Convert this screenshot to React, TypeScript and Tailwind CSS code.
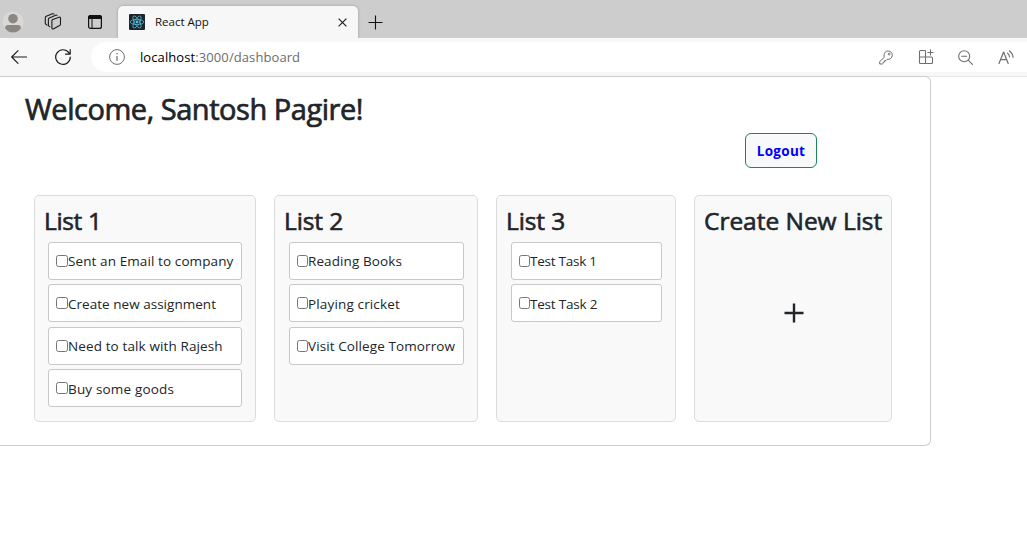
type Task = { label: string; track: string };
type List = { title: string; width: string; tasks: Task[]; pad: string; box: string; track: string };

const lists: List[] = [
  {
    title: "List 1",
    width: "w-[222px]",
    pad: "mx-[13px]",
    box: "w-[12px]",
    track: "tracking-[-0.35px]",
    tasks: [
      { label: "Sent an Email to company", track: "tracking-[0.1px]" },
      { label: "Create new assignment", track: "tracking-[0.03px]" },
      { label: "Need to talk with Rajesh", track: "tracking-[0.12px]" },
      { label: "Buy some goods", track: "tracking-[0.17px]" },
    ],
  },
  {
    title: "List 2",
    width: "w-[204px]",
    pad: "ml-[14px] mr-[13px]",
    box: "w-[11px]",
    track: "tracking-[-0.1px]",
    tasks: [
      { label: "Reading Books", track: "tracking-[0.1px]" },
      { label: "Playing cricket", track: "tracking-[0.15px]" },
      { label: "Visit College Tomorrow", track: "tracking-[0.1px]" },
    ],
  },
  {
    title: "List 3",
    width: "w-[180px]",
    pad: "ml-[14px] mr-[13px]",
    box: "w-[11px]",
    track: "tracking-[-0.1px]",
    tasks: [
      { label: "Test Task 1", track: "tracking-[-0.25px]" },
      { label: "Test Task 2", track: "tracking-[-0.2px]" },
    ],
  },
];

function TabStrip() {
  return (
    <div className="flex h-[38px] items-end bg-[#cdcdcd]">
      <div className="flex h-[32px] w-[118px] shrink-0 items-center">
        <svg className="ml-[2px]" width="22" height="22" viewBox="0 0 22 22">
          <circle cx="11" cy="11" r="10.5" fill="#dad8d5" />
          <circle cx="11" cy="7.7" r="4.8" fill="#8b8785" />
          <path d="M3 17.200c0-2.300 1.300-3.300 3.200-3.300h9.600c1.900 0 3.200 1 3.200 3.300-1.800 2.800-4.700 4.300-8 4.300s-6.200-1.500-8-4.300z" fill="#8b8785" />
        </svg>
        <svg className="ml-[20px]" width="18" height="18" viewBox="0 0 18 18" fill="none" stroke="#1b1b1b" strokeWidth="1.100" strokeLinejoin="round" strokeLinecap="round">
          <path d="M8.200 6.800l6.800-2.600c.8-.3 1.500.1 1.500.9v6.100c0 .6-.3 1-.9 1.300l-5.900 3.300c-.9.500-1.800.1-1.800-.9V7.700c0-.4.100-.7.300-.9z" />
          <path d="M5.800 13.700l-.9-.6c-.4-.3-.5-.6-.5-1.100V6.300c0-.7.300-1.100.9-1.400L11.600 2.200c.5-.2 1-.2 1.400.2" />
          <path d="M3 12.100l-1.100-.8c-.4-.3-.6-.6-.6-1.100V4.700c0-.7.300-1.100.9-1.400L8.400.8c.6-.2 1-.2 1.500.2" />
        </svg>
        <svg className="ml-[26px]" width="14" height="14" viewBox="0 0 14 14">
          <rect x=".6" y=".6" width="12.800" height="12.800" rx="2" fill="none" stroke="#111" strokeWidth="1.200" />
          <path d="M0 4V2.500A2.500 2.500 0 0 1 2.500 0h9A2.500 2.500 0 0 1 14 2.500V4z" fill="#111" />
          <path d="M4 4v9.500" stroke="#111" />
        </svg>
      </div>
      <div className="flex h-[32px] w-[240px] shrink-0 items-center rounded-t-[5px] bg-[#f7f7f7] shadow-[0_0_3px_rgba(0,0,0,0.25)]">
        <svg className="ml-[11px]" width="16" height="16" viewBox="0 0 16 16">
          <rect width="16" height="16" rx="1" fill="#20232a" />
          <g fill="none" stroke="#53c1de" strokeWidth=".75">
            <ellipse cx="8" cy="8" rx="6.800" ry="2.600" />
            <ellipse cx="8" cy="8" rx="6.800" ry="2.600" transform="rotate(60 8 8)" />
            <ellipse cx="8" cy="8" rx="6.800" ry="2.600" transform="rotate(120 8 8)" />
          </g>
          <circle cx="8" cy="8" r="1.400" fill="#53c1de" />
        </svg>
        <span className="ml-[10px] text-[11.5px] leading-[16px] whitespace-nowrap text-[#111]">React App</span>
        <svg className="mr-[11px] ml-auto" width="9" height="9" viewBox="0 0 9 9" stroke="#222" strokeWidth="1.200">
          <path d="M.6.6l7.800 7.800M8.400.6L.6 8.400" />
        </svg>
      </div>
      <div className="flex h-[32px] items-center pl-[10px]">
        <svg width="15" height="15" viewBox="0 0 15 15" stroke="#111" strokeWidth="1.100">
          <path d="M7.500 .5v14M.5 7.500h14" />
        </svg>
      </div>
    </div>
  );
}

function Toolbar() {
  return (
    <div className="relative flex h-[38px] items-center bg-[#f7f7f7]">
      <svg className="ml-[11px] shrink-0" width="16" height="14" viewBox="0 0 16 14" fill="none" stroke="#1b1b1b" strokeWidth="1.100" strokeLinecap="round" strokeLinejoin="round">
        <path d="M15.500 7H.7M7 .7L.7 7 7 13.300" />
      </svg>
      <svg className="ml-[28px] shrink-0" width="16" height="16" viewBox="0 0 16 16" fill="none" stroke="#1b1b1b" strokeWidth="1.200" strokeLinecap="round" strokeLinejoin="round">
        <path d="M15.300 8A7.300 7.300 0 1 1 13.800 3.600L15 5M15.200.6V5.100H10.500" />
      </svg>
      <div className="ml-[20px] flex h-[30px] flex-1 items-center rounded-l-full bg-white">
        <svg className="ml-[18px]" width="16" height="16" viewBox="0 0 16 16" fill="none" stroke="#6f6f6f">
          <circle cx="8" cy="8" r="7.400" />
          <path d="M8 7v4.700" strokeWidth="1.200" />
          <circle cx="8" cy="4.800" r=".8" fill="#6f6f6f" stroke="none" />
        </svg>
        <span className="ml-[15px] text-[13px] leading-[18px] tracking-[0.09px] whitespace-nowrap text-[#6c6c6c]">
          <span className="text-black">localhost</span>:3000/dashboard
        </span>
        <div className="ml-auto flex items-center text-[#6f6f6f]">
          <svg width="14" height="15" viewBox="0 0 14 15" fill="none" stroke="currentColor" strokeLinejoin="round">
            <path d="M5.200 7.400C4.500 3.800 6 1.100 8.900 1c2.600 0 4.400 1.700 4.400 4.100 0 2.900-2.300 4.700-5.200 4.200L7 10.500H5.700V12H4.300v1.200L3.300 14H.7v-2.400z" />
            <circle cx="10.200" cy="4.100" r=".9" />
          </svg>
          <svg className="ml-[25px]" width="16" height="16" viewBox="0 0 16 16" fill="none" stroke="currentColor" strokeWidth="1.100">
            <path d="M7.500 1.500H2.500a1 1 0 0 0-1 1v11a1 1 0 0 0 1 1h11a1 1 0 0 0 1-1V9a1 1 0 0 0-1-1h-12M7.500 1.500v13M12.500 .5v6M9.500 3.500h6" />
          </svg>
          <svg className="ml-[24px]" width="15" height="15" viewBox="0 0 15 15" fill="none" stroke="currentColor" strokeWidth="1.100" strokeLinecap="round">
            <circle cx="6.200" cy="6.200" r="5.500" />
            <path d="M3.700 6.200h5M10.200 10.200l4.200 4.200" />
          </svg>
          <svg className="mr-[13px] ml-[25px]" width="16" height="15" viewBox="0 0 16 15" fill="none" stroke="currentColor" strokeWidth="1.200" strokeLinecap="round" strokeLinejoin="round">
            <path d="M1 13.500L5.600 2l4.600 11.500M2.600 9.700h6" />
            <path d="M9.600 3.200c1.100.8 1.800 2 1.900 3.600M11.400.9c2.200 1.500 3.500 3.600 3.600 6.300" />
          </svg>
        </div>
      </div>
    </div>
  );
}

function ListCard({ list }: { list: List }) {
  return (
    <section className={`${list.width} h-[227px] shrink-0 rounded-[5px] border border-[#dcdcdc] bg-[#f9f9f9]`}>
      <h4 className={`mt-[9px] ml-[9px] h-[32px] text-[24.500px] leading-[32px] whitespace-nowrap [-webkit-text-stroke:0.6px_#212529] ${list.track}`}>{list.title}</h4>
      <ul className={`${list.pad} mt-[5px] flex flex-col gap-[4.330px]`}>
        {list.tasks.map((task, i) => (
          <li key={task.label} className="flex h-[38px] items-center rounded-[3px] border border-[#c8c8c8] bg-white pl-[7px]">
            <input type="checkbox" className={`${list.box} h-[12px] shrink-0 appearance-none rounded-[2.500px] border border-[#767676] bg-white`} />
            <label className={`text-[13.500px] leading-[20px] whitespace-nowrap ${i % 2 ? "pt-[2px]" : "pt-0"} ${task.track}`}>{task.label}</label>
          </li>
        ))}
      </ul>
    </section>
  );
}

export default function App() {
  return (
    <div className="h-[552px] w-[1027px] overflow-hidden bg-white font-['Open_Sans','Noto_Sans',sans-serif] text-[#212529]">
      <TabStrip />
      <Toolbar />
      <div className="h-[476px] border-t border-[#e6e6e6]">
        <main className="-mt-px h-[370px] w-[931px] rounded-r-[6px] border border-l-0 border-[#cccccc]">
          <h2 className="mt-[14px] ml-[25px] h-[36px] text-[29px] leading-[36px] tracking-[-0.46px] whitespace-nowrap [-webkit-text-stroke:0.7px_#212529]">Welcome, Santosh Pagire!</h2>
          <div className="mt-[6px] mr-[113px] flex justify-end">
            <button className="h-[35px] w-[72px] rounded-[6px] border border-[#198754] bg-[#f8f9fa] text-[13.500px] leading-[20px] font-bold tracking-[0.3px] text-[#0000ff]">Logout</button>
          </div>
          <div className="mt-[27px] ml-[34px] flex gap-[18px]">
            {lists.map((list) => (
              <ListCard key={list.title} list={list} />
            ))}
            <section className="h-[227px] w-[198px] shrink-0 rounded-[5px] border border-[#dcdcdc] bg-[#f9f9f9]">
              <h4 className="mt-[9px] ml-[9px] h-[32px] text-[24.500px] leading-[32px] tracking-[-0.03px] whitespace-nowrap [-webkit-text-stroke:0.6px_#212529]">Create New List</h4>
              <div className="mt-[66px] flex justify-center pl-px">
                <svg width="20" height="20" viewBox="0 0 20 20" stroke="#212529" strokeWidth="2.400">
                  <path d="M10 .5v19M.5 10h19" />
                </svg>
              </div>
            </section>
          </div>
        </main>
      </div>
    </div>
  );
}
